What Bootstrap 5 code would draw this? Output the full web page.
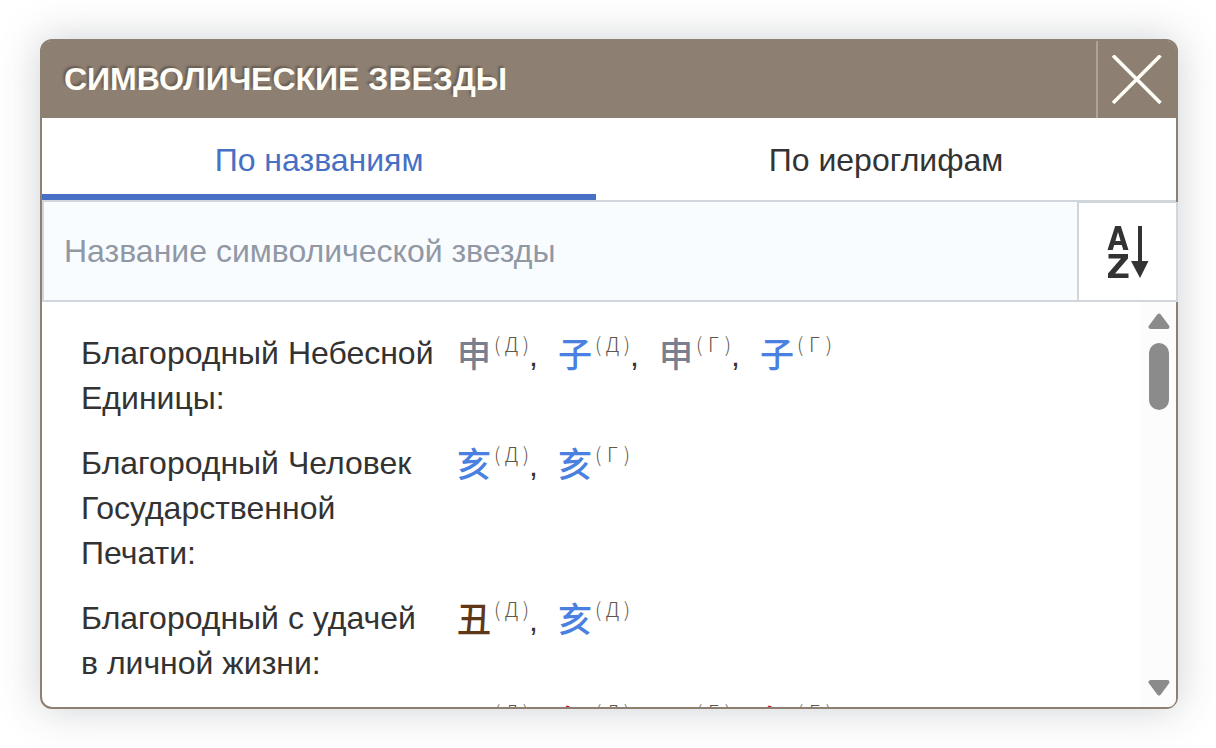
<!DOCTYPE html>
<html lang="ru">
<head>
<meta charset="utf-8">
<meta name="viewport" content="width=device-width, initial-scale=1">
<title>Символические звезды</title>
<link href="https://cdn.jsdelivr.net/npm/bootstrap@5.3.0/dist/css/bootstrap.min.css" rel="stylesheet">
<style>
  body { font-family: "Liberation Sans", Arial, sans-serif; font-size: 32px; line-height: 45px; color: #333; padding: 39px 38px 39px 40px; background: #fff; }
  .stars-panel { border: 2px solid #8d7f72; border-radius: 12px; box-shadow: 0 0 40px rgba(60, 66, 80, .25); background: #fff; min-width: 0; }
  .panel-head { background: #8d7f72; border-radius: 9px 9px 0 0; height: 77px; }
  .panel-title { font-size: 32px; line-height: 76px; color: #fffdf7; text-shadow: -2px -2px 2px #6a5d50; padding-left: 22px; }
  .close-btn { width: 80px; border-left: 2px solid #ada398; color: #fffdf7; }
  .tabs-row { border-bottom: 2px solid #d0d6db; }
  .tabs-row .nav-link { padding: 20px 0 11px; color: #333; border-radius: 0; border-bottom: 6px solid transparent; }
  .tabs-row .nav-link.active { color: #4770c4; border-bottom-color: #4770c4; }
  .search-row { margin-right: -2px; }
  .search-row .form-control { font-size: 32px; line-height: 45px; padding: 27px 20px 26px; background: #f8fcff; border: solid #d0d6db; border-width: 0 0 2px 2px; }
  .search-row .form-control::placeholder { color: #9198a4; opacity: 1; }
  .sort-btn { width: 101px; border: 2px solid #d0d6db; border-top-width: 1px; color: #333; }
  .list-area { min-height: 0; }
  .stars-list { padding: 29px 0 0 39px; gap: 20px; }
  .star-name { width: 376px; padding-right: 18px; margin: 0; font-weight: 400; }
  .star-signs { gap: 19px; margin: 0; padding-top: 2px; }
  .sign { display: flex; width: 82px; }
  .han { font-family: "Noto Sans CJK SC", sans-serif; font-size: 34px; font-weight: 500; line-height: 39px; width: 37px; }
  .pos { font-family: "Noto Sans CJK JP", sans-serif; font-size: 20px; font-weight: 200; line-height: 22px; width: 35px; color: #5f574b; display: flex; justify-content: space-between; }
  .star-cut { margin-top: -7px; }
  .metal { color: #78808f; } .water { color: #4a80e0; } .earth { color: #613817; } .fire { color: #c8202a; }
  .scroll-track { width: 36px; background: #fcfcfc; padding: 11px 0 11px 1px; color: #8b8b8b; }
  .scroll-thumb { width: 20px; height: 67px; border-radius: 10px; background: #8b8b8b; margin-top: 14px; }
</style>
</head>
<body class="vh-100 d-flex">
<main class="stars-panel flex-fill d-flex flex-column">
  <header class="panel-head d-flex flex-shrink-0">
    <h1 class="panel-title fw-bold flex-fill m-0">СИМВОЛИЧЕСКИЕ ЗВЕЗДЫ</h1>
    <button type="button" class="close-btn btn rounded-0 border-end-0 border-top-0 border-bottom-0 p-0 d-flex align-items-center justify-content-center" aria-label="Закрыть">
      <svg width="50" height="50" viewBox="0 0 50 50" fill="none" stroke="currentColor" stroke-width="3.6"><path d="M1 .5l47.500 47.500M48.500 .5L1 48"/></svg>
    </button>
  </header>
  <nav class="tabs-row nav nav-fill flex-shrink-0">
    <a class="nav-item nav-link active" href="#names" aria-current="page">По названиям</a>
    <a class="nav-item nav-link" href="#signs">По иероглифам</a>
  </nav>
  <form class="search-row d-flex flex-shrink-0">
    <input type="text" class="form-control rounded-0" placeholder="Название символической звезды" aria-label="Название символической звезды">
    <button type="button" class="sort-btn btn rounded-0 p-0 flex-shrink-0 d-flex align-items-center justify-content-center" aria-label="Сортировать по алфавиту">
      <svg width="42" height="52" viewBox="0 0 42 52" fill="currentColor"><path fill-rule="evenodd" d="M.5 24L8.200 0h5.600l7.700 24h-5.200l-1.500-5H7.200l-1.500 5zM8.400 15h5.200L11 6zM1.500 28H21v4.500L8 47.500H21.500V52H1v-4.500L14 32.500H1.500z"/><path d="M31 0h4v35h6.500L33 52 24 35h7z"/></svg>
    </button>
  </form>
  <div class="list-area d-flex flex-fill overflow-hidden rounded-bottom-3">
    <div class="stars-list flex-fill d-flex flex-column" id="names">
      <dl class="d-flex m-0"><dt class="star-name flex-shrink-0">Благородный Небесной Единицы:</dt>
        <dd class="star-signs d-flex"><span class="sign"><span class="han metal">申</span><span class="pos"><i class="fst-normal">(</i>Д<i class="fst-normal">)</i></span>,</span><span class="sign"><span class="han water">子</span><span class="pos"><i class="fst-normal">(</i>Д<i class="fst-normal">)</i></span>,</span><span class="sign"><span class="han metal">申</span><span class="pos"><i class="fst-normal">(</i>Г<i class="fst-normal">)</i></span>,</span><span class="sign"><span class="han water">子</span><span class="pos"><i class="fst-normal">(</i>Г<i class="fst-normal">)</i></span></span></dd></dl>
      <dl class="d-flex m-0"><dt class="star-name flex-shrink-0">Благородный Человек Государственной Печати:</dt>
        <dd class="star-signs d-flex"><span class="sign"><span class="han water">亥</span><span class="pos"><i class="fst-normal">(</i>Д<i class="fst-normal">)</i></span>,</span><span class="sign"><span class="han water">亥</span><span class="pos"><i class="fst-normal">(</i>Г<i class="fst-normal">)</i></span></span></dd></dl>
      <dl class="d-flex m-0"><dt class="star-name flex-shrink-0">Благородный с удачей в личной жизни:</dt>
        <dd class="star-signs d-flex"><span class="sign"><span class="han earth">丑</span><span class="pos"><i class="fst-normal">(</i>Д<i class="fst-normal">)</i></span>,</span><span class="sign"><span class="han water">亥</span><span class="pos"><i class="fst-normal">(</i>Д<i class="fst-normal">)</i></span></span></dd></dl>
      <dl class="star-cut d-flex mb-0"><dt class="star-name flex-shrink-0"></dt>
        <dd class="star-signs d-flex"><span class="sign"><span class="han metal">酉</span><span class="pos"><i class="fst-normal">(</i>Д<i class="fst-normal">)</i></span></span><span class="sign"><span class="han fire">午</span><span class="pos"><i class="fst-normal">(</i>Д<i class="fst-normal">)</i></span></span><span class="sign"><span class="han metal">酉</span><span class="pos"><i class="fst-normal">(</i>Г<i class="fst-normal">)</i></span></span><span class="sign"><span class="han fire">午</span><span class="pos"><i class="fst-normal">(</i>Г<i class="fst-normal">)</i></span></span></dd></dl>
    </div>
    <div class="scroll-track flex-shrink-0 d-flex flex-column align-items-center">
      <svg width="22" height="16" viewBox="0 0 22 16" fill="currentColor" stroke="currentColor" stroke-width="4" stroke-linejoin="round"><path d="M11 2.500L2.500 14h17z"/></svg>
      <div class="scroll-thumb"></div>
      <svg class="mt-auto" width="22" height="16" viewBox="0 0 22 16" fill="currentColor" stroke="currentColor" stroke-width="4" stroke-linejoin="round"><path d="M11 13.500L2.500 2h17z"/></svg>
    </div>
  </div>
</main>
<script src="https://cdn.jsdelivr.net/npm/bootstrap@5.3.0/dist/js/bootstrap.bundle.min.js"></script>
</body>
</html>
